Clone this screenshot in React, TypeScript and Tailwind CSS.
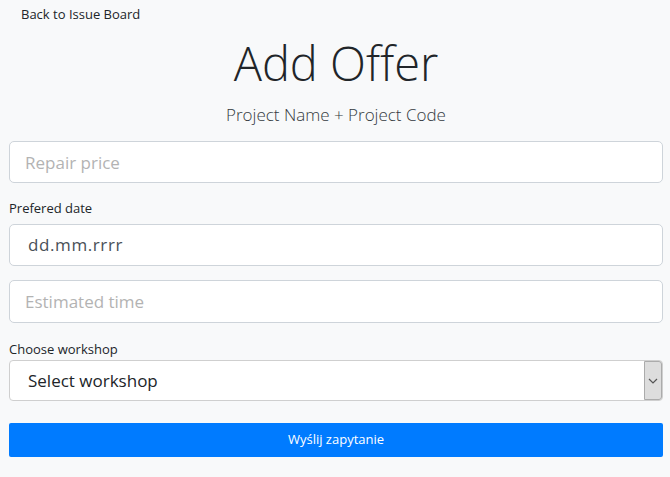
import React from "react";

export default function App() {
  const font = { fontFamily: '"Open Sans", "Noto Sans", sans-serif' };
  return (
    <div className="min-h-[477px] w-[670px] bg-[#f8f9fa] text-[#212529]" style={font}>
      <div className="flex flex-col pl-[9px] pr-[7px]">
        <div className="h-[28px] pl-[12px] pt-[4px] text-[13px] leading-[20px]">Back to Issue Board</div>
        <h1 className="mt-[6px] text-center text-[47px] font-light leading-[58px] text-[#212529]">Add Offer</h1>
        <div className="mt-[11px] text-center text-[17px] font-light leading-[24px] text-[#343a40]">
          Project Name + Project Code
        </div>
        <input
          className="mt-[14px] h-[42px] w-full rounded-[5px] border border-[#ced4da] bg-white px-[15px] text-[17px] outline-none placeholder:text-[#b3b3b3]"
          placeholder="Repair price"
        />
        <label className="mt-[16px] block text-[13px] leading-[18px]">Prefered date</label>
        <div className="mt-[7px] flex h-[42px] w-full items-center rounded-[5px] border border-[#ced4da] bg-white px-[18px] text-[17px] tracking-[0.6px] text-[#495057]">
          dd.mm.rrrr
        </div>
        <input
          className="mt-[14px] h-[43px] w-full rounded-[5px] border border-[#ced4da] bg-white px-[15px] text-[17px] outline-none placeholder:text-[#b3b3b3]"
          placeholder="Estimated time"
        />
        <label className="mt-[17px] block text-[13px] leading-[18px]">Choose workshop</label>
        <div className="mt-[2px] flex h-[41px] w-full items-stretch rounded-[4px] border border-[#cfcfcf] bg-white">
          <div className="flex flex-1 items-center px-[18px] text-[17px] text-[#212529]">Select workshop</div>
          <div className="flex w-[18px] items-center justify-center rounded-r-[3px] border border-[#ababab] bg-[#dddddd]">
            <svg width="10" height="6" viewBox="0 0 10 6">
              <path d="M1 1l4 4 4-4" fill="none" stroke="#555" strokeWidth="1.2" />
            </svg>
          </div>
        </div>
        <button className="mt-[22px] h-[34px] w-full rounded-[2px] bg-[#007bff] text-[13px] text-white">
          Wyślij zapytanie
        </button>
      </div>
    </div>
  );
}
